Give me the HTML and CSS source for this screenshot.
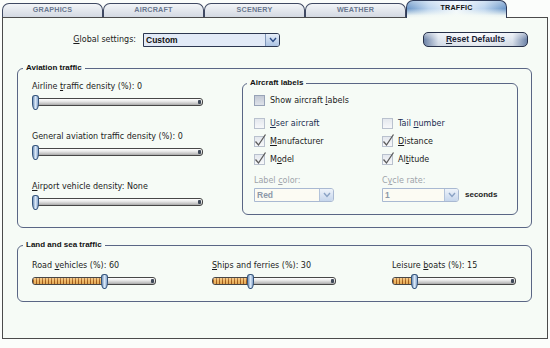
FILE: index.html
```html
<!DOCTYPE html>
<html>
<head>
<meta charset="utf-8">
<link rel="stylesheet" href="styles.css">
</head>
<body>
<div class="tabs">
  <div class="tab">GRAPHICS</div>
  <div class="tab">AIRCRAFT</div>
  <div class="tab">SCENERY</div>
  <div class="tab">WEATHER</div>
  <div class="tab active">TRAFFIC</div>
</div>
<div class="panel">
  <div class="top-row">
    <div class="global-label"><u>G</u>lobal settings:</div>
    <div class="combo main">
      <span class="combo-text">Custom</span>
      <span class="combo-btn"><svg width="10" height="8" viewBox="0 0 10 8"><polyline points="2,2 5,5.5 8,2" fill="none" stroke="#2a4a84" stroke-width="1.4"/></svg></span>
    </div>
    <div class="reset"><u>R</u>eset Defaults</div>
  </div>

  <fieldset class="group aviation">
    <legend>Aviation traffic</legend>
    <div class="av-body">
      <div class="slider-col">
        <div class="slider-block">
          <div class="label">Airline <u>t</u>raffic density (%): 0</div>
          <div class="slider"><div class="track"><div class="fill" style="width:0px"></div><div class="thumb" style="left:-1px"></div></div></div>
        </div>
        <div class="slider-block">
          <div class="label">General aviation traf<u>f</u>ic density (%): 0</div>
          <div class="slider"><div class="track"><div class="fill" style="width:0px"></div><div class="thumb" style="left:-1px"></div></div></div>
        </div>
        <div class="slider-block">
          <div class="label"><u>A</u>irport vehicle density: None</div>
          <div class="slider"><div class="track"><div class="fill" style="width:0px"></div><div class="thumb" style="left:-1px"></div></div></div>
        </div>
      </div>

      <fieldset class="group labels">
        <legend>Aircraft labels</legend>
        <div class="cb-item show"><span class="cb strong"></span><span>Show aircraft <u>l</u>abels</span></div>
        <div class="cb-grid">
          <div class="cb-item"><span class="cb"></span><span class="navy"><u>U</u>ser aircraft</span></div>
          <div class="cb-item"><span class="cb"></span><span class="navy">Tail <u>n</u>umber</span></div>
          <div class="cb-item"><span class="cb"><svg class="check" width="13" height="14" viewBox="0 0 13 14"><polyline points="1.5,8.5 4.5,12 11.5,1.5" fill="none" stroke="#5c5c5c" stroke-width="1.3"/></svg></span><span><u>M</u>anufacturer</span></div>
          <div class="cb-item"><span class="cb"><svg class="check" width="13" height="14" viewBox="0 0 13 14"><polyline points="1.5,8.5 4.5,12 11.5,1.5" fill="none" stroke="#5c5c5c" stroke-width="1.3"/></svg></span><span><u>D</u>istance</span></div>
          <div class="cb-item"><span class="cb"><svg class="check" width="13" height="14" viewBox="0 0 13 14"><polyline points="1.5,8.5 4.5,12 11.5,1.5" fill="none" stroke="#5c5c5c" stroke-width="1.3"/></svg></span><span>M<u>o</u>del</span></div>
          <div class="cb-item"><span class="cb"><svg class="check" width="13" height="14" viewBox="0 0 13 14"><polyline points="1.5,8.5 4.5,12 11.5,1.5" fill="none" stroke="#5c5c5c" stroke-width="1.3"/></svg></span><span>Al<u>t</u>itude</span></div>
        </div>
        <div class="sel-grid">
          <div class="sel-item">
            <div class="dis-label">Label <u>c</u>olor:</div>
            <div class="combo small color">
              <span class="combo-text">Red</span>
              <span class="combo-btn"><svg width="10" height="8" viewBox="0 0 10 8"><polyline points="2,2 5,5.5 8,2" fill="none" stroke="#8aa2c4" stroke-width="1.4"/></svg></span>
            </div>
          </div>
          <div class="sel-item">
            <div class="dis-label">C<u>y</u>cle rate:</div>
            <div class="sel-row">
              <div class="combo small cycle">
                <span class="combo-text">1</span>
                <span class="combo-btn"><svg width="10" height="8" viewBox="0 0 10 8"><polyline points="2,2 5,5.5 8,2" fill="none" stroke="#8aa2c4" stroke-width="1.4"/></svg></span>
              </div>
              <span class="seconds">seconds</span>
            </div>
          </div>
        </div>
      </fieldset>
    </div>
  </fieldset>

  <fieldset class="group land">
    <legend>Land and sea traffic</legend>
    <div class="land-grid">
      <div class="slider-block">
        <div class="label">Road <u>v</u>ehicles (%): 60</div>
        <div class="slider short"><div class="track"><div class="fill" style="width:72px"></div><div class="thumb" style="left:68px"></div></div></div>
      </div>
      <div class="slider-block">
        <div class="label"><u>S</u>hips and ferries (%): 30</div>
        <div class="slider short"><div class="track"><div class="fill" style="width:38px"></div><div class="thumb" style="left:34px"></div></div></div>
      </div>
      <div class="slider-block">
        <div class="label">Leisure <u>b</u>oats (%): 15</div>
        <div class="slider short"><div class="track"><div class="fill" style="width:22px"></div><div class="thumb" style="left:18px"></div></div></div>
      </div>
    </div>
  </fieldset>
</div>
</body>
</html>
```

FILE: styles.css
```css
* { box-sizing: border-box; }
html, body { margin: 0; padding: 0; }
body {
  width: 550px;
  height: 348px;
  overflow: hidden;
  background: #fbfdfb;
  font-family: "DejaVu Sans", Verdana, sans-serif;
  font-size: 8px;
  line-height: 10px;
  color: #1c1c1c;
}
u { text-decoration: underline; text-underline-offset: 1px; }

/* tabs */
.tabs {
  display: flex;
  align-items: flex-end;
  height: 17px;
  padding-left: 2px;
  position: relative;
  z-index: 1;
}
.tab {
  width: 101px;
  height: 14px;
  border: 1px solid #3f4962;
  border-bottom: none;
  border-radius: 7px 7px 0 0;
  background: linear-gradient(#f3f5f8, #d3d9e2);
  font: bold 7.2px/12px "Liberation Sans", Arial, sans-serif;
  color: #6a7890;
  letter-spacing: 0.2px;
  text-align: center;
}
.tab.active {
  height: 18px;
  margin-bottom: -1px;
  border-color: #2e3a58;
  line-height: 13px;
  color: #141414;
  background:
    linear-gradient(rgba(255,255,255,0.35), rgba(255,255,255,0) 45%, rgba(246,251,246,0.9) 85%, #f6fbf6),
    linear-gradient(90deg, #6b97c9, #bcd4ee 22%, #f1f7fc 50%, #bcd4ee 78%, #6b97c9);
}

/* panel */
.panel {
  margin: 0 2px;
  height: 322px;
  border: 1px solid #4b4b4b;
  background: #f6fbf6;
  padding: 15px 15px 0 14px;
}
.top-row {
  display: flex;
  align-items: flex-start;
  height: 14px;
}
.global-label {
  width: 119px;
  text-align: right;
  line-height: 14px;
  margin-right: 7px;
}
.combo {
  display: flex;
  height: 14px;
  border: 1px solid #2c3750;
  border-radius: 0 3px 3px 0;
  background: #e2eaf7;
}
.combo.main { width: 137px; }
.combo-text {
  flex: 1;
  padding-left: 2px;
  font: bold 8.5px/12px "Liberation Sans", Arial, sans-serif;
  color: #111;
}
.combo-btn {
  width: 14px;
  border-left: 1px solid #8097ba;
  border-radius: 0 2px 2px 0;
  background: linear-gradient(#e6eef9, #abc2e2);
  display: flex;
  align-items: center;
  justify-content: center;
}
.reset {
  margin-left: auto;
  margin-right: 4px;
  margin-top: -1px;
  width: 105px;
  height: 15px;
  border: 1px solid #27314a;
  border-radius: 5px;
  background:
    linear-gradient(rgba(255,255,255,0.5), rgba(255,255,255,0) 50%, rgba(120,135,160,0.15)),
    linear-gradient(90deg, #6d83a8, #dfe6ef 14%, #f6f8fb 50%, #dfe6ef 86%, #6d83a8);
  text-align: center;
  font: bold 8.5px/13px "Liberation Sans", Arial, sans-serif;
  color: #1a2234;
}

/* group boxes */
.group {
  margin: 0;
  min-width: 0;
  border: 1px solid #5a6685;
  border-radius: 6px;
}
.group > legend {
  padding: 0 3px;
  font: bold 8px/10px "Liberation Sans", Arial, sans-serif;
  color: #111;
}
.aviation {
  margin-top: 16px;
  padding: 5px 13px 12px 14px;
}
.aviation > legend { margin-left: -9px; }
.av-body {
  display: grid;
  grid-template-columns: 171px 276px;
  column-gap: 39px;
  align-items: start;
}
.slider-col {
  padding-top: 4px;
  display: flex;
  flex-direction: column;
  gap: 22px;
}
.slider-block .label { height: 10px; white-space: nowrap; }
.slider { height: 15px; padding-top: 3px; margin-top: 3px; }
.track {
  position: relative;
  height: 8px;
  border: 1px solid #474747;
  border-radius: 3px;
  background: linear-gradient(#ffffff, #e8e8e8 40%, #c6c6c6 75%, #a9a9a9);
}
.track::after {
  content: "";
  position: absolute;
  right: 1px;
  top: 1px;
  width: 3px;
  height: 4px;
  border-radius: 1px;
  background: #3e4858;
}
.fill {
  height: 100%;
  border-radius: 2px 0 0 2px;
  background:
    linear-gradient(rgba(255,255,255,0.25), rgba(255,255,255,0) 50%, rgba(120,60,0,0.15)),
    repeating-linear-gradient(90deg, #a55f1f 0 1px, #f0bb68 1px 3px);
}
.thumb {
  position: absolute;
  top: -4px;
  width: 7px;
  height: 15px;
  border: 1px solid #34547c;
  border-radius: 3px 3px 3px 3px / 3px 3px 7px 7px;
  background: linear-gradient(90deg, #7495be, #d9e7f6 50%, #8ba8ce);
}

/* aircraft labels */
.labels {
  padding: 6px 10px 12px 11px;
}
.labels > legend { margin-left: -7px; }
.cb-item {
  display: flex;
  align-items: center;
  gap: 5px;
  height: 13px;
  white-space: nowrap;
}
.cb {
  position: relative;
  flex: none;
  width: 11px;
  height: 11px;
  border: 1px solid #b9c1ce;
  background: linear-gradient(#e4e8ee, #f7f8fa);
}
.cb.strong {
  border-color: #98a3b7;
  background: linear-gradient(#c3c9d5, #dfe3ea);
}
.check {
  position: absolute;
  left: -1px;
  top: -4px;
  overflow: visible;
}
.navy { color: #1b2e52; }
.cb-grid {
  margin-top: 10px;
  display: grid;
  grid-template-columns: 128px auto;
  row-gap: 5px;
}
.sel-grid {
  margin-top: 10px;
  display: grid;
  grid-template-columns: 128px auto;
}
.dis-label {
  color: #9ea3aa;
  height: 10px;
  margin-bottom: 2px;
}
.combo.small {
  border-color: #a9b9d2;
  background: #fcfbf3;
}
.combo.small .combo-text { color: #8d98a8; }
.combo.small .combo-btn {
  border-left-color: #b3c3da;
  background: linear-gradient(#eef3fa, #c6d6ec);
}
.combo.color { width: 80px; }
.combo.cycle { width: 77px; }
.sel-row {
  display: flex;
  align-items: center;
  gap: 6px;
}
.seconds {
  font: bold 8px/10px "Liberation Sans", Arial, sans-serif;
  color: #222;
}

/* land and sea */
.land {
  margin-top: 12px;
  padding: 11px 13px 12px 14px;
}
.land > legend { margin-left: -9px; }
.land-grid {
  display: grid;
  grid-template-columns: 180px 180px auto;
}
.slider.short { width: 124px; }
.slider.short .track { width: 124px; }
```
